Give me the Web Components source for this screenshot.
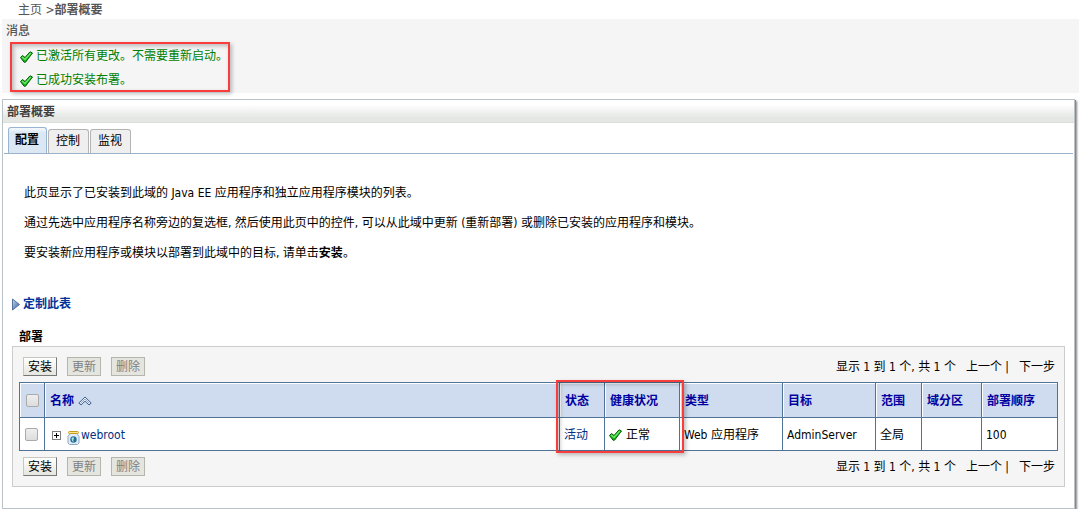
<!DOCTYPE html>
<html lang="zh-CN">
<head>
<meta charset="utf-8">
<title>部署概要</title>
<style>
  body {
    margin: 0;
    background: #fff;
    color: #000;
    font: 12px/18px "DejaVu Sans Condensed", "Noto Sans CJK SC", sans-serif;
  }
</style>
</head>
<body>
<deploy-page></deploy-page>

<script>
// 图标
const ICONS = {
  check: `<svg width="13" height="12" viewBox="0 0 13 12">
    <path d="M0.5 6.5 L2.5 4.5 L5 6.5 L10 0.8 L12.5 2 L5.5 11.2 L4 11.2 Z" fill="#18b818" stroke="#0a5a0a" stroke-linejoin="round"/>
    <path d="M2 6 L5 8.5 L10.8 2" fill="none" stroke="#6fec6f" stroke-width="1.2"/>
  </svg>`,
  arrow: `<svg width="8" height="13" viewBox="0 0 8 13">
    <defs><linearGradient id="g" x1="0" y1="0" x2="1" y2="1">
      <stop offset="0" stop-color="#c9dbf3"/><stop offset="1" stop-color="#2f5690"/>
    </linearGradient></defs>
    <path d="M0.5 1 L7.5 6.5 L0.5 12 Z" fill="url(#g)" stroke="#54739f" stroke-linejoin="round"/>
  </svg>`,
  sort: `<svg width="14" height="10" viewBox="0 0 14 10">
    <path d="M0.8 7 L7 1 L13.2 7 L11 9 L7 5.2 L3 9 Z" fill="#e4edf8" stroke="#44628c" stroke-linejoin="round"/>
    <path d="M2.5 7.4 L7 3.1 L11.5 7.4" fill="none" stroke="#8ea6c6"/>
  </svg>`,
  plus: `<svg width="9" height="9" viewBox="0 0 9 9" shape-rendering="crispEdges">
    <rect x="0.5" y="0.5" width="8" height="8" fill="#fff" stroke="#808080"/>
    <path d="M2 4.5 H7 M4.5 2 V7" stroke="#000"/>
  </svg>`,
  jar: `<svg width="13" height="16" viewBox="0 0 13 16">
    <path d="M3 3.5 H10 L12 6.5 V13 L10.5 14.5 H2.5 L1 13 V6.5 Z" fill="#e2edf7" stroke="#8ba6c2" stroke-linejoin="round"/>
    <rect x="1.5" y="1.5" width="10" height="2" rx="1" fill="#fbe59a" stroke="#c69a1b"/>
    <circle cx="6.5" cy="9.5" r="3.2" fill="#216e9e"/>
    <path d="M4.5 8 L6.5 7 L7 9 L6 10 L7 12 L5 11 Z" fill="#b5e2d0"/>
  </svg>`,
};

class WlsIcon extends HTMLElement {
  constructor() {
    super();
    const shadow = this.attachShadow({ mode: "open" });
    shadow.innerHTML = `
      <style>
        :host { display: inline-flex; flex: none; }
        svg { display: block; }
      </style>
      ${ICONS[this.getAttribute("name")]}
    `;
  }
}

// 红色标注框
class MarkFrame extends HTMLElement {
  constructor() {
    super();
    const shadow = this.attachShadow({ mode: "open" });
    shadow.innerHTML = `
      <style>
        :host {
          display: block;
          box-sizing: border-box;
          border: 2px solid #f93c3c;
          box-shadow: 2px 2px 4px rgba(0, 0, 0, 0.25), inset 2px 2px 4px rgba(0, 0, 0, 0.25);
        }
      </style>
      <slot></slot>
    `;
  }
}

class NavTrail extends HTMLElement {
  constructor() {
    super();
    const shadow = this.attachShadow({ mode: "open" });
    shadow.innerHTML = `
      <style>
        :host { display: block; padding: 1px 16px 0; color: #555; }
        a { color: inherit; text-decoration: none; }
      </style>
      <a href="#home">主页</a> &gt;<b><slot></slot></b>
    `;
  }
}

class MessageBox extends HTMLElement {
  constructor() {
    super();
    const shadow = this.attachShadow({ mode: "open" });
    shadow.innerHTML = `
      <style>
        :host { display: block; background: #f5f5f5; padding: 3px 4px 1px; }
        h2 { margin: 0; padding-bottom: 2px; font-size: 12px; font-weight: 500; color: #555; }
        mark-frame {
          display: grid;
          gap: 2px;
          width: fit-content;
          margin-left: 4px;
        }
      </style>
      <h2>消息</h2>
      <mark-frame><slot></slot></mark-frame>
    `;
  }
}

class MessageItem extends HTMLElement {
  constructor() {
    super();
    const shadow = this.attachShadow({ mode: "open" });
    shadow.innerHTML = `
      <style>
        :host {
          display: flex;
          align-items: center;
          gap: 3px;
          padding: 3px 0 1px 8px;
          color: #008000;
        }
        wls-icon { padding-top: 2px; }
      </style>
      <wls-icon name="check"></wls-icon><span><slot></slot></span>
    `;
  }
}

class PortletPanel extends HTMLElement {
  constructor() {
    super();
    const shadow = this.attachShadow({ mode: "open" });
    shadow.innerHTML = `
      <style>
        :host {
          display: block;
          margin: 6px 4px 0 0;
          border: 1px solid #b9c3c7;
          background: #fff;
          box-shadow: 1px 1px #888, 2px 2px 2px #888;
        }
        h1 {
          margin: 0;
          padding: 3px 4px 1px;
          font-size: 12px;
          color: #404040;
          background: linear-gradient(#fff 20%, #e4e7e4 80%);
          border-bottom: 1px solid #dcdfdc;
        }
      </style>
      <h1>${this.getAttribute("heading")}</h1>
      <slot></slot>
    `;
  }
}

class TabBar extends HTMLElement {
  constructor() {
    super();
    const shadow = this.attachShadow({ mode: "open" });
    shadow.innerHTML = `
      <style>
        :host {
          display: flex;
          align-items: flex-end;
          gap: 1px;
          margin: 0 1px;
          padding: 4px 4px 0;
          border-bottom: 1px solid #9cb2cb;
        }
      </style>
      <slot></slot>
    `;
  }
}

class TabItem extends HTMLElement {
  constructor() {
    super();
    const shadow = this.attachShadow({ mode: "open" });
    shadow.innerHTML = `
      <style>
        :host { display: block; }
        a {
          display: block;
          padding: 2px 8px 3px 7px;
          color: #000;
          text-decoration: none;
          background: #efefef;
          border: 1px solid #b4b4b4;
          border-bottom: 0;
          border-radius: 3px 3px 0 0;
        }
        :host([active]) a {
          padding: 3px 7px 4px 6px;
          font-weight: bold;
          background: linear-gradient(#f5f9fd, #dbe8f4 5px);
          border-color: #98b6d3;
        }
      </style>
      <a href="#tab"><slot></slot></a>
    `;
  }
}

class TableControls extends HTMLElement {
  constructor() {
    super();
    const shadow = this.attachShadow({ mode: "open" });
    shadow.innerHTML = `
      <style>
        :host {
          display: flex;
          justify-content: space-between;
          align-items: center;
          padding: 6px 3px 6px 4px;
        }
        .buttons, .pager { display: flex; gap: 10px; }
        button {
          font: inherit;
          line-height: 16px;
          padding: 1px 4px 0;
          color: #000;
          background: linear-gradient(#fff, #e6e6df);
          border: 1px solid #c8c8c0;
          border-right-color: #777;
          border-bottom-color: #777;
        }
        button:disabled {
          color: #808080;
          background: #e5e5df;
          border-color: #b5b5ad;
        }
      </style>
      <div class="buttons">
        <button type="button">安装</button>
        <button type="button" disabled>更新</button>
        <button type="button" disabled>删除</button>
      </div>
      <div class="pager">
        <span>显示 1 到 1 个, 共 1 个</span>
        <span>上一个 |</span>
        <span>下一步</span>
      </div>
    `;
  }
}

class DeployTable extends HTMLElement {
  constructor() {
    super();
    const shadow = this.attachShadow({ mode: "open" });
    shadow.innerHTML = `
      <style>
        :host { display: block; }
        table {
          width: 100%;
          table-layout: fixed;
          border-collapse: collapse;
          background: #fff;
        }
        th, td {
          border: 1px solid #4f7297;
          padding: 2px 4px 0;
          text-align: left;
          white-space: nowrap;
        }
        th {
          position: relative;
          height: 32px;
          padding: 2px 5px 0;
          color: #0000a0;
          background: #cfdbee;
          box-shadow: inset 1px 1px #fff;
        }
        td { height: 30px; }
        input {
          appearance: none;
          display: block;
          box-sizing: border-box;
          width: 13px;
          height: 13px;
          margin: 0 1px 2px;
          border: 1px solid #aaa;
          border-radius: 2px;
          background: linear-gradient(#eee, #ddd);
        }
        .cell { display: flex; align-items: center; gap: 4px; }
        .tree { padding-left: 3px; gap: 6px; }
        .tree a { display: flex; align-items: center; gap: 1px; }
        .tree a wls-icon { padding-top: 6px; }
        a { color: #003080; text-decoration: none; }
        mark-frame {
          position: absolute;
          top: -3px;
          left: -4px;
          width: 128px;
          height: 73px;
          z-index: 1;
          pointer-events: none;
        }
      </style>
      <table>
        <colgroup>
          <col style="width: 25px"><col>
          <col style="width: 45px"><col style="width: 75px">
          <col style="width: 103px"><col style="width: 93px">
          <col style="width: 46px"><col style="width: 60px">
          <col style="width: 76px">
        </colgroup>
        <thead>
          <tr>
            <th><input type="checkbox" aria-label="全选"></th>
            <th><div class="cell">名称<wls-icon name="sort"></wls-icon></div></th>
            <th>状态<mark-frame></mark-frame></th>
            <th>健康状况</th>
            <th>类型</th>
            <th>目标</th>
            <th>范围</th>
            <th>域分区</th>
            <th>部署顺序</th>
          </tr>
        </thead>
        <tbody>
          <tr>
            <td><input type="checkbox" aria-label="webroot"></td>
            <td><div class="cell tree"><wls-icon name="plus"></wls-icon><a href="#webroot"><wls-icon name="jar"></wls-icon>webroot</a></div></td>
            <td><a href="#state">活动</a></td>
            <td><div class="cell"><wls-icon name="check"></wls-icon>正常</div></td>
            <td>Web 应用程序</td>
            <td>AdminServer</td>
            <td>全局</td>
            <td></td>
            <td>100</td>
          </tr>
        </tbody>
      </table>
    `;
  }
}

class DeployPage extends HTMLElement {
  constructor() {
    super();
    const shadow = this.attachShadow({ mode: "open" });
    shadow.innerHTML = `
      <style>
        :host { display: block; padding: 0 3px 0 2px; }
        .intro { padding: 30px 21px 33px; }
        p { margin: 0 0 12px; }
        p:last-child { margin: 0; }
        .customize {
          display: flex;
          align-items: center;
          gap: 3px;
          padding: 0 9px;
          width: fit-content;
          font-weight: bold;
          color: #003399;
          text-decoration: none;
        }
        h3 { margin: 15px 16px 0; font-size: 12px; }
        .list {
          margin: 0 9px 21px;
          padding: 4px 6px;
          border: 1px solid #ccc;
          background: #f5f5f5;
        }
      </style>
      <nav-trail>部署概要</nav-trail>
      <message-box>
        <message-item>已激活所有更改。不需要重新启动。</message-item>
        <message-item>已成功安装布署。</message-item>
      </message-box>
      <portlet-panel heading="部署概要">
        <tab-bar>
          <tab-item active>配置</tab-item>
          <tab-item>控制</tab-item>
          <tab-item>监视</tab-item>
        </tab-bar>
        <div class="intro">
          <p>此页显示了已安装到此域的 Java EE 应用程序和独立应用程序模块的列表。</p>
          <p>通过先选中应用程序名称旁边的复选框, 然后使用此页中的控件, 可以从此域中更新 (重新部署) 或删除已安装的应用程序和模块。</p>
          <p>要安装新应用程序或模块以部署到此域中的目标, 请单击<b>安装</b>。</p>
        </div>
        <a class="customize" href="#customize"><wls-icon name="arrow"></wls-icon>定制此表</a>
        <h3>部署</h3>
        <div class="list">
          <table-controls></table-controls>
          <deploy-table></deploy-table>
          <table-controls></table-controls>
        </div>
      </portlet-panel>
    `;
  }
}

// 组件注册
customElements.define("wls-icon", WlsIcon);
customElements.define("mark-frame", MarkFrame);
customElements.define("nav-trail", NavTrail);
customElements.define("message-box", MessageBox);
customElements.define("message-item", MessageItem);
customElements.define("portlet-panel", PortletPanel);
customElements.define("tab-bar", TabBar);
customElements.define("tab-item", TabItem);
customElements.define("table-controls", TableControls);
customElements.define("deploy-table", DeployTable);
customElements.define("deploy-page", DeployPage);
</script>
</body>
</html>
